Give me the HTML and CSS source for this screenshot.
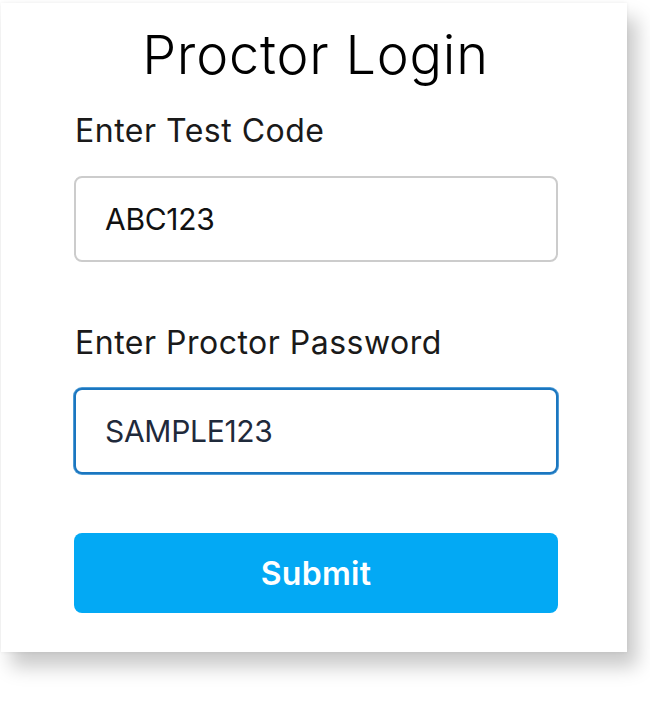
FILE: index.html
```html
<!DOCTYPE html>
<html lang="en">
<head>
<meta charset="utf-8">
<title>Proctor Login</title>
<link rel="stylesheet" href="styles.css">
</head>
<body>
<div class="card">
  <h1 class="title">Proctor Login</h1>
  <form class="form">
    <label class="field">
      <span class="label">Enter Test Code</span>
      <input class="input" type="text" value="ABC123">
    </label>
    <label class="field">
      <span class="label">Enter Proctor Password</span>
      <input class="input input--focused input--dark" type="text" value="SAMPLE123">
    </label>
    <button class="submit" type="button">Submit</button>
  </form>
</div>
</body>
</html>
```

FILE: styles.css
```css
html, body {
  margin: 0;
  padding: 0;
  background: #ffffff;
}

body {
  font-family: Inter, "Open Sans", sans-serif;
  width: 650px;
  height: 705px;
  overflow: hidden;
}

.card {
  box-sizing: border-box;
  margin: 3px 0 0 1px;
  width: 626px;
  height: 649px;
  background: #ffffff;
  padding: 22px 70px 0 73px;
  box-shadow: 10px 15px 18px rgba(0, 0, 0, 0.21), 0 0 4px rgba(0, 0, 0, 0.07);
  display: flex;
  flex-direction: column;
}

.title {
  margin: 0;
  font-size: 54px;
  line-height: 60px;
  font-weight: 300;
  color: #000000;
  text-align: center;
  letter-spacing: 0.8px;
}

.form {
  display: flex;
  flex-direction: column;
  margin-top: 26px;
}

.field {
  display: flex;
  flex-direction: column;
  gap: 25px;
  margin-bottom: 61px;
}

.field + .field {
  margin-bottom: 59px;
}

.label {
  font-size: 32px;
  line-height: 40px;
  color: #1a1a1a;
  letter-spacing: 0.5px;
  padding-left: 1px;
}

.input {
  box-sizing: border-box;
  width: 484px;
  height: 86px;
  border: 2px solid #cccccc;
  border-radius: 8px;
  padding: 0 0 0 29px;
  font-family: Inter, "Open Sans", sans-serif;
  font-size: 30px;
  font-weight: 400;
  color: #111111;
  letter-spacing: -0.3px;
  background: #ffffff;
  outline: none;
}

.input--focused {
  border-color: #1b76bf;
  box-shadow: 0 0 0 1px #4f9cd6;
}

.input--dark {
  color: #1f2a3b;
}

.submit {
  box-sizing: border-box;
  width: 484px;
  height: 80px;
  border: none;
  border-radius: 8px;
  background: #03a9f4;
  color: #ffffff;
  font-family: Inter, "Open Sans", sans-serif;
  font-size: 32px;
  font-weight: 600;
  letter-spacing: 0.3px;
  cursor: pointer;
}
```
